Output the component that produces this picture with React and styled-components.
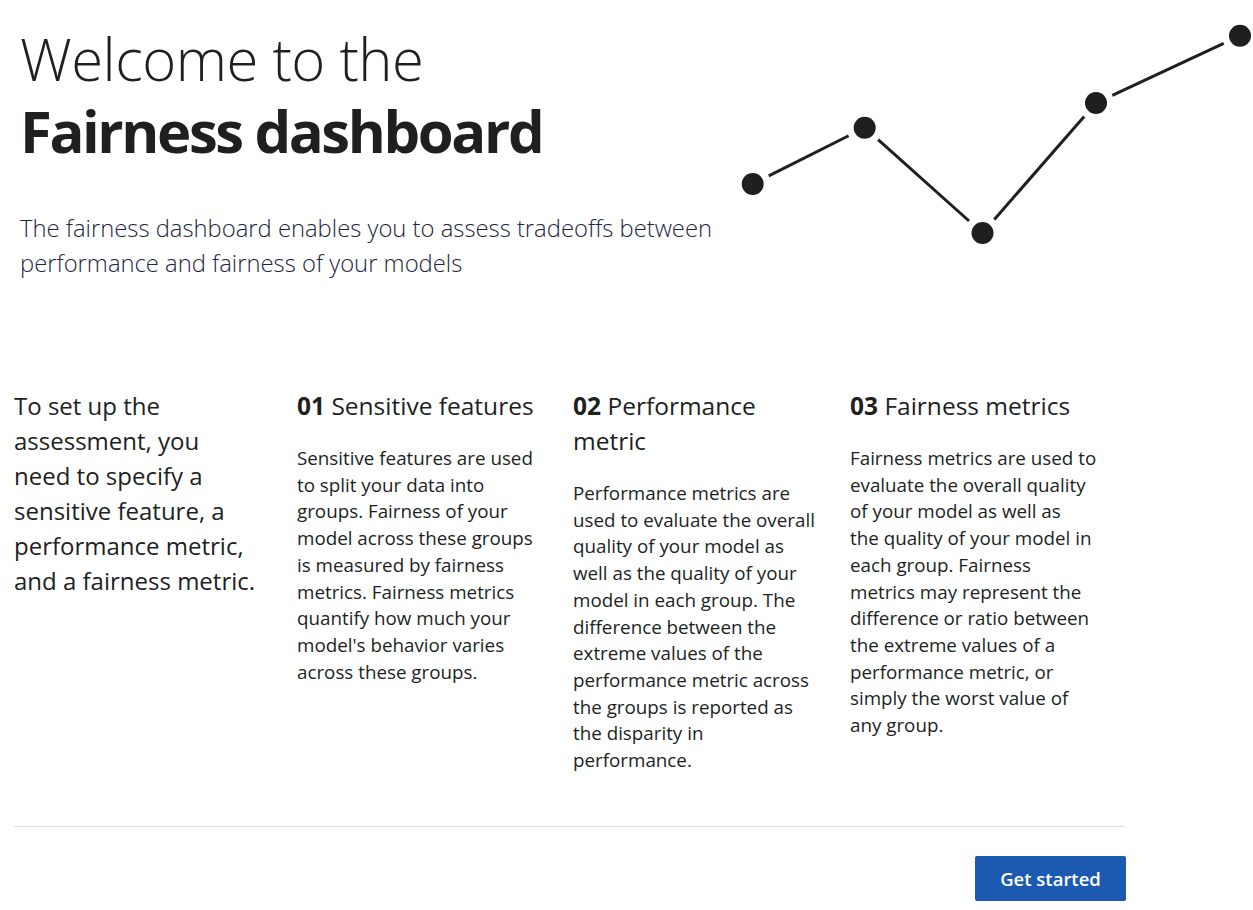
import React from "react";
import styled, { createGlobalStyle } from "styled-components";

const Global = createGlobalStyle`
  html, body { margin: 0; padding: 0; background: #ffffff; }
  body { font-family: "Open Sans", "Noto Sans", "Liberation Sans", sans-serif; color: #201f1e; }
  * { box-sizing: border-box; }
`;

const Page = styled.div`
  width: 1253px;
  min-height: 910px;
  display: flex;
  flex-direction: column;
`;

const Header = styled.header`
  display: flex;
  justify-content: space-between;
  align-items: flex-start;
  height: 388px;
`;

const Intro = styled.div`
  flex: 1;
  min-width: 0;
  padding: 23px 0 0 20px;
  display: flex;
  flex-direction: column;
`;

const TitleLight = styled.h1`
  margin: 0;
  font-size: 58px;
  font-weight: 300;
  line-height: 72px;
  color: #201f1e;
  letter-spacing: -0.5px;
`;

const TitleBold = styled.span`
  display: block;
  font-weight: 700;
  letter-spacing: -2.4px;
`;

const Subtitle = styled.p`
  margin: 44px 0 0;
  font-size: 23.8px;
  font-weight: 300;
  line-height: 35px;
  color: #1c2640;
`;

const Line = styled.span`
  display: block;
  white-space: nowrap;
`;

const Chart = styled.svg`
  flex: none;
  margin-top: 20px;
`;

const Steps = styled.section`
  display: grid;
  grid-template-columns: 283px 276px 277px 1fr;
  margin: 0 128px 0 14px;
  padding-bottom: 52px;
  border-bottom: 1px solid #e1dfdd;
`;

const Lead = styled.p`
  margin: 0;
  font-size: 24px;
  line-height: 35px;
  color: #201f1e;
`;

const Step = styled.div`
  display: flex;
  flex-direction: column;
`;

const StepTitle = styled.h2`
  margin: 0;
  font-size: 24.5px;
  font-weight: 400;
  line-height: 35px;
  color: #201f1e;
`;

const StepNum = styled.b`
  font-weight: 700;
`;

const StepText = styled.p`
  margin: 22px 0 0;
  font-size: 18.8px;
  line-height: 26.7px;
  color: #201f1e;
`;

const Footer = styled.div`
  display: flex;
  justify-content: flex-end;
  margin: 29px 127px 0 14px;
`;

const Primary = styled.button`
  width: 151px;
  height: 45px;
  border: none;
  border-radius: 2px;
  background: #1b5ab0;
  color: #ffffff;
  font-family: inherit;
  font-size: 18.5px;
  font-weight: 600;
  cursor: pointer;
`;

const pts = [
  [752.7, 184],
  [864.7, 127.7],
  [982.5, 233],
  [1096, 103],
  [1240, 35.7],
];
const OX = 730;
const OY = 20;

function LineChart() {
  const gap = 18;
  const segs = [];
  for (let i = 0; i < pts.length - 1; i++) {
    const [x1, y1] = pts[i];
    const [x2, y2] = pts[i + 1];
    const dx = x2 - x1;
    const dy = y2 - y1;
    const len = Math.hypot(dx, dy);
    const ux = dx / len;
    const uy = dy / len;
    segs.push(
      <line
        key={i}
        x1={x1 + ux * gap - OX}
        y1={y1 + uy * gap - OY}
        x2={x2 - ux * gap - OX}
        y2={y2 - uy * gap - OY}
        stroke="#201f1e"
        strokeWidth="3"
      />
    );
  }
  return (
    <Chart width="523" height="230" viewBox="0 0 523 230">
      {segs}
      {pts.map(([x, y], i) => (
        <circle key={i} cx={x - OX} cy={y - OY} r="11" fill="#201f1e" />
      ))}
    </Chart>
  );
}

const Lines = ({ lines }) => lines.map((l, i) => <Line key={i}>{l}</Line>);

const steps = [
  {
    num: "01",
    title: ["Sensitive features"],
    text: [
      "Sensitive features are used",
      "to split your data into",
      "groups. Fairness of your",
      "model across these groups",
      "is measured by fairness",
      "metrics. Fairness metrics",
      "quantify how much your",
      "model's behavior varies",
      "across these groups.",
    ],
  },
  {
    num: "02",
    title: ["Performance", "metric"],
    text: [
      "Performance metrics are",
      "used to evaluate the overall",
      "quality of your model as",
      "well as the quality of your",
      "model in each group. The",
      "difference between the",
      "extreme values of the",
      "performance metric across",
      "the groups is reported as",
      "the disparity in",
      "performance.",
    ],
  },
  {
    num: "03",
    title: ["Fairness metrics"],
    text: [
      "Fairness metrics are used to",
      "evaluate the overall quality",
      "of your model as well as",
      "the quality of your model in",
      "each group. Fairness",
      "metrics may represent the",
      "difference or ratio between",
      "the extreme values of a",
      "performance metric, or",
      "simply the worst value of",
      "any group.",
    ],
  },
];

export default function App() {
  return (
    <Page>
      <Global />
      <Header>
        <Intro>
          <TitleLight>
            Welcome to the
            <TitleBold>Fairness dashboard</TitleBold>
          </TitleLight>
          <Subtitle>
            <Lines
              lines={[
                "The fairness dashboard enables you to assess tradeoffs between",
                "performance and fairness of your models",
              ]}
            />
          </Subtitle>
        </Intro>
        <LineChart />
      </Header>
      <Steps>
        <Lead>
          <Lines
            lines={[
              "To set up the",
              "assessment, you",
              "need to specify a",
              "sensitive feature, a",
              "performance metric,",
              "and a fairness metric.",
            ]}
          />
        </Lead>
        {steps.map((s) => (
          <Step key={s.num}>
            <StepTitle>
              {s.title.map((t, i) => (
                <Line key={i}>
                  {i === 0 && <StepNum>{s.num} </StepNum>}
                  {t}
                </Line>
              ))}
            </StepTitle>
            <StepText>
              <Lines lines={s.text} />
            </StepText>
          </Step>
        ))}
      </Steps>
      <Footer>
        <Primary>Get started</Primary>
      </Footer>
    </Page>
  );
}
